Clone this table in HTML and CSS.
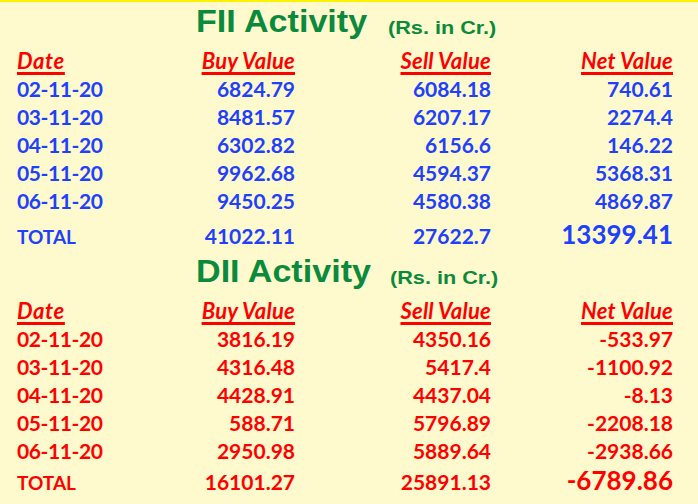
FILE: index.html
```html
<!DOCTYPE html>
<html>
<head>
<meta charset="utf-8">
<link rel="stylesheet" href="styles.css">
</head>
<body>
<div class="page">
  <section class="block fii">
    <h1 class="title"><span class="name">FII Activity</span><span class="unit">(Rs. in Cr.)</span></h1>
    <div class="grid">
      <div class="hd left">Date</div><div class="hd">Buy Value</div><div class="hd">Sell Value</div><div class="hd">Net Value</div>
      <div class="left">02-11-20</div><div>6824.79</div><div>6084.18</div><div>740.61</div>
      <div class="left">03-11-20</div><div>8481.57</div><div>6207.17</div><div>2274.4</div>
      <div class="left">04-11-20</div><div>6302.82</div><div>6156.6</div><div>146.22</div>
      <div class="left">05-11-20</div><div>9962.68</div><div>4594.37</div><div>5368.31</div>
      <div class="left">06-11-20</div><div>9450.25</div><div>4580.38</div><div>4869.87</div>
      <div class="left tot">TOTAL</div><div class="tot">41022.11</div><div class="tot">27622.7</div><div class="tot big">13399.41</div>
    </div>
  </section>
  <section class="block dii">
    <h1 class="title"><span class="name">DII Activity</span><span class="unit">(Rs. in Cr.)</span></h1>
    <div class="grid">
      <div class="hd left">Date</div><div class="hd">Buy Value</div><div class="hd">Sell Value</div><div class="hd">Net Value</div>
      <div class="left">02-11-20</div><div>3816.19</div><div>4350.16</div><div>-533.97</div>
      <div class="left">03-11-20</div><div>4316.48</div><div>5417.4</div><div>-1100.92</div>
      <div class="left">04-11-20</div><div>4428.91</div><div>4437.04</div><div>-8.13</div>
      <div class="left">05-11-20</div><div>588.71</div><div>5796.89</div><div>-2208.18</div>
      <div class="left">06-11-20</div><div>2950.98</div><div>5889.64</div><div>-2938.66</div>
      <div class="left tot">TOTAL</div><div class="tot">16101.27</div><div class="tot">25891.13</div><div class="tot big">-6789.86</div>
    </div>
  </section>
</div>
</body>
</html>
```
FILE: styles.css
```css
html, body {
  margin: 0;
  padding: 0;
}
body {
  background: #fffacd;
  width: 698px;
  height: 504px;
  overflow: hidden;
}
.page {
  border-top: 2px solid #fff200;
  min-height: 502px;
}
.title {
  margin: 0;
  padding: 2px 0 0 196px;
  height: 36px;
  line-height: 36px;
  font-family: "Liberation Sans", Arial, sans-serif;
  font-weight: bold;
  color: #0a8a3c;
  display: flex;
  align-items: baseline;
}
.title .name {
  font-size: 31px;
  display: inline-block;
  transform: scaleX(1.1);
  transform-origin: left center;
  width: 192px;
}
.title .unit {
  font-size: 19px;
  display: inline-block;
  transform: translateY(2px) scaleX(1.14);
  transform-origin: left center;
}
.dii .title .unit {
  margin-left: 2px;
}
.grid {
  display: grid;
  grid-template-columns: 100px 178px 196px 182px;
  padding-left: 17px;
  padding-top: 7px;
  align-items: baseline;
  font-family: Lato, "Noto Sans", sans-serif;
  font-weight: bold;
  font-size: 21px;
  line-height: 28px;
}
.grid > div {
  text-align: right;
  white-space: nowrap;
}
.grid > div.left {
  text-align: left;
  letter-spacing: -0.4px;
}
.fii .grid { color: #2040ff; }
.dii .grid { color: #ff0000; }
.grid > .hd {
  color: #ff0000;
  font-style: italic;
  font-size: 22px;
  text-decoration: underline;
  text-decoration-thickness: 3px;
  text-underline-offset: 3px;
  text-decoration-skip-ink: none;
  letter-spacing: 0.2px;
}
.grid > .hd.left {
  letter-spacing: 0.6px;
}
.grid > .tot {
  padding-top: 4px;
  line-height: 30px;
}
.dii .grid > .tot {
  padding-top: 0;
}
.grid > .tot.left {
  font-size: 19px;
  letter-spacing: 0;
}
.grid > .big {
  font-size: 26px;
}
```
